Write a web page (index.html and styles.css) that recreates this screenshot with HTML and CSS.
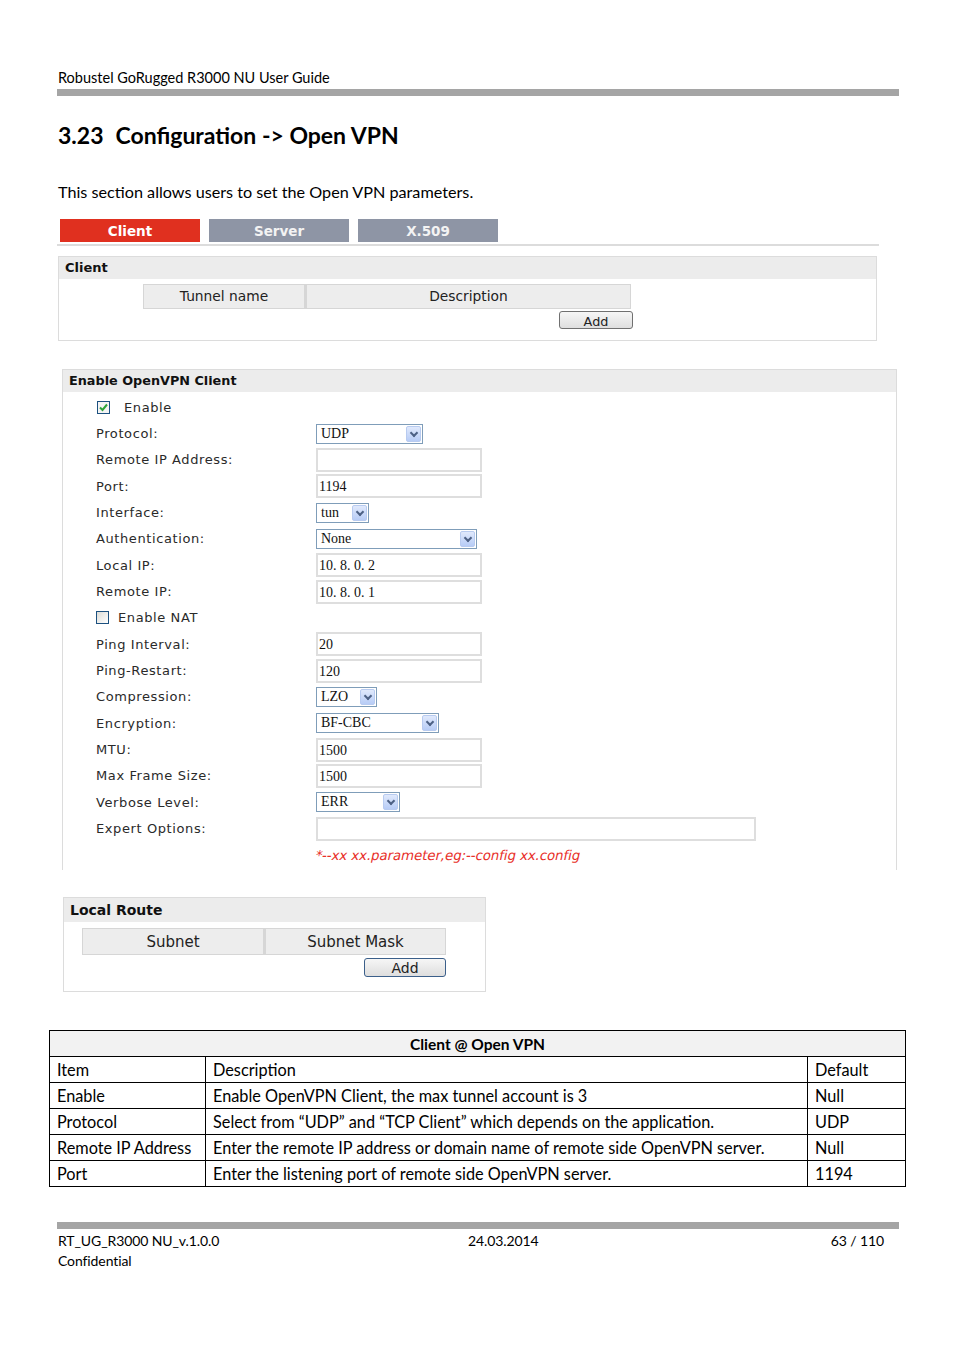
FILE: index.html
```html
<!DOCTYPE html>
<html>
<head>
<meta charset="utf-8">
<link rel="stylesheet" href="styles.css">
</head>
<body>
<div class="page">
  <div class="doc-header">Robustel GoRugged R3000 NU User Guide</div>
  <div class="rule"></div>
  <h1 class="title"><span class="num">3.23</span>Configuration -&gt; Open VPN</h1>
  <p class="intro">This section allows users to set the Open VPN parameters.</p>

  <div class="ui">
    <div class="tabs">
      <div class="tab active">Client</div>
      <div class="tab">Server</div>
      <div class="tab">X.509</div>
    </div>

    <div class="panel client-panel">
      <div class="panel-head">Client</div>
      <div class="list-wrap client-list">
        <div class="list-head">
          <div class="lh-cell tn">Tunnel name</div>
          <div class="lh-cell desc">Description</div>
        </div>
        <div class="btn-row"><span class="btn add1">Add</span></div>
      </div>
    </div>

    <div class="panel vpn-panel">
      <div class="panel-head">Enable OpenVPN Client</div>
      <div class="form">
        <div class="row check-row"><span class="cb checked"><svg viewBox="0 0 11 11" width="11" height="11"><path d="M2 5.5 L4.5 8 L9 2.5" fill="none" stroke="#2ea43a" stroke-width="2"/></svg></span><span class="cb-label">Enable</span></div>
        <div class="row"><span class="lbl">Protocol:</span><span class="sel w-udp"><span class="val">UDP</span><span class="arrow"></span></span></div>
        <div class="row"><span class="lbl">Remote IP Address:</span><span class="inp"></span></div>
        <div class="row"><span class="lbl">Port:</span><span class="inp">1194</span></div>
        <div class="row"><span class="lbl">Interface:</span><span class="sel w-tun"><span class="val">tun</span><span class="arrow"></span></span></div>
        <div class="row"><span class="lbl">Authentication:</span><span class="sel w-none"><span class="val">None</span><span class="arrow"></span></span></div>
        <div class="row"><span class="lbl">Local IP:</span><span class="inp">10.&#8197;8.&#8197;0.&#8197;2</span></div>
        <div class="row"><span class="lbl">Remote IP:</span><span class="inp">10.&#8197;8.&#8197;0.&#8197;1</span></div>
        <div class="row check-row"><span class="cb"></span><span class="cb-label nat">Enable NAT</span></div>
        <div class="row"><span class="lbl">Ping Interval:</span><span class="inp">20</span></div>
        <div class="row"><span class="lbl">Ping-Restart:</span><span class="inp">120</span></div>
        <div class="row"><span class="lbl">Compression:</span><span class="sel w-lzo"><span class="val">LZO</span><span class="arrow"></span></span></div>
        <div class="row"><span class="lbl">Encryption:</span><span class="sel w-bf"><span class="val">BF-CBC</span><span class="arrow"></span></span></div>
        <div class="row"><span class="lbl">MTU:</span><span class="inp">1500</span></div>
        <div class="row"><span class="lbl">Max Frame Size:</span><span class="inp">1500</span></div>
        <div class="row"><span class="lbl">Verbose Level:</span><span class="sel w-err"><span class="val">ERR</span><span class="arrow"></span></span></div>
        <div class="row"><span class="lbl">Expert Options:</span><span class="inp wide"></span></div>
        <div class="row hint-row"><span class="lbl"></span><span class="hint">*--xx xx.parameter,eg:--config xx.config</span></div>
      </div>
    </div>

    <div class="panel route-panel">
      <div class="panel-head">Local Route</div>
      <div class="list-wrap route-list">
        <div class="list-head">
          <div class="lh-cell sn">Subnet</div>
          <div class="lh-cell sm">Subnet Mask</div>
        </div>
        <div class="btn-row"><span class="btn add2">Add</span></div>
      </div>
    </div>
  </div>

  <table class="spec">
    <tr><th colspan="3">Client @ Open VPN</th></tr>
    <tr><td class="c1">Item</td><td class="c2">Description</td><td class="c3">Default</td></tr>
    <tr><td>Enable</td><td>Enable OpenVPN Client, the max tunnel account is 3</td><td>Null</td></tr>
    <tr><td>Protocol</td><td>Select from “UDP” and “TCP Client” which depends on the application.</td><td>UDP</td></tr>
    <tr><td>Remote IP Address</td><td>Enter the remote IP address or domain name of remote side OpenVPN server.</td><td>Null</td></tr>
    <tr><td>Port</td><td>Enter the listening port of remote side OpenVPN server.</td><td>1194</td></tr>
  </table>

  <div class="footer">
    <div class="rule foot-rule"></div>
    <div class="foot-line">
      <span class="f-left">RT_UG_R3000 NU_v.1.0.0</span>
      <span class="f-mid">24.03.2014</span>
      <span class="f-right">63 / 110</span>
    </div>
    <div class="foot-conf">Confidential</div>
  </div>
</div>
</body>
</html>
```
FILE: styles.css
```css
html, body {
  margin: 0;
  padding: 0;
  background: #ffffff;
}
.page {
  width: 954px;
  height: 1350px;
  position: relative;
  font-family: "Lato", "Open Sans", "Liberation Sans", sans-serif;
  color: #000;
}
.doc-header {
  padding: 69px 0 0 58px;
  font-size: 14.5px;
  line-height: 18px;
  height: 20px;
  box-sizing: content-box;
}
.rule {
  margin: 0 0 0 57px;
  width: 842px;
  height: 7px;
  background: #a5a5a5;
}
.title {
  margin: 0;
  padding: 24px 0 0 58px;
  font-size: 23px;
  line-height: 30px;
  font-weight: 700;
  height: 30px;
  box-sizing: content-box;
}
.title .num {
  margin-right: 12px;
}
.intro {
  margin: 0;
  padding: 32px 0 0 58px;
  font-size: 16.2px;
  line-height: 20px;
}

/* ---------- UI screenshot ---------- */
.ui {
  font-family: "DejaVu Sans", "Liberation Sans", sans-serif;
  font-size: 13px;
  color: #222;
  margin-top: 17px;
}
.tabs {
  margin-left: 57px;
  width: 822px;
  padding: 0 0 2px 3px;
  border-bottom: 2px solid #dcdcdc;
  display: flex;
  gap: 9px;
  box-sizing: border-box;
}
.tab {
  width: 140px;
  height: 23px;
  line-height: 24px;
  background: #8e95a5;
  color: #f3f3f3;
  text-align: center;
  font-weight: 700;
  font-family: "DejaVu Sans", sans-serif;
  font-size: 13.5px;
}
.tab.active {
  background: #e0301f;
  color: #ffffff;
}
.panel {
  border: 1px solid #dcdcdc;
  box-sizing: border-box;
  background: #fff;
}
.panel-head {
  background: #ececec;
  font-weight: 700;
  color: #111;
  font-size: 13px;
  height: 22px;
  line-height: 22px;
  padding-left: 6px;
}
.client-panel {
  margin: 10px 0 0 58px;
  width: 819px;
  height: 85px;
}
.list-wrap {
  display: flex;
  flex-direction: column;
}
.client-list {
  padding: 5px 0 0 84px;
}
.list-head {
  display: flex;
}
.lh-cell {
  background: #ededed;
  border: 1px solid #d6d6d6;
  text-align: center;
  box-sizing: border-box;
  height: 25px;
  line-height: 23px;
  color: #222;
  font-size: 13.8px;
}
.lh-cell + .lh-cell { border-left-width: 2px; }
.tn { width: 162px; }
.desc { width: 326px; }
.btn-row {
  display: flex;
  justify-content: flex-end;
}
.client-list .btn-row { width: 490px; }
.btn {
  display: block;
  box-sizing: border-box;
  border: 1px solid #707070;
  border-radius: 3px;
  background: linear-gradient(#f6f6f6, #dedede);
  text-align: center;
  color: #222;
}
.add1 {
  width: 74px;
  height: 18px;
  line-height: 20px;
  margin-top: 2px;
  font-size: 12.8px;
}
.vpn-panel {
  margin: 28px 0 0 62px;
  width: 835px;
  height: 501px;
  border-bottom: none;
}
.vpn-panel .panel-head {
  font-size: 12.8px;
}
.form {
  padding: 2px 0 0 33px;
}
.row {
  display: flex;
  align-items: center;
  height: 26.35px;
}
.lbl {
  width: 220px;
  flex: none;
  color: #2a2a2a;
  letter-spacing: 0.6px;
}
.check-row .cb-label {
  margin-left: 9px;
  color: #2a2a2a;
  letter-spacing: 0.6px;
}
.check-row:first-child .cb-label { margin-left: 14px; }
.check-row:first-child .cb { margin-left: 1px; }
.cb {
  width: 13px;
  height: 13px;
  box-sizing: border-box;
  border: 1px solid #1c5180;
  background: linear-gradient(135deg, #dcdcd7, #ffffff);
  display: flex;
  align-items: center;
  justify-content: center;
  flex: none;
}
.cb.checked { background: #f4f4f4; }
.inp {
  display: block;
  width: 166px;
  height: 24px;
  box-sizing: border-box;
  border: 2px solid #dedede;
  font-family: "Liberation Serif", "DejaVu Serif", serif;
  font-size: 14px;
  line-height: 21px;
  padding-left: 1px;
  color: #111;
}
.inp.wide { width: 440px; }
.sel {
  display: flex;
  align-items: center;
  justify-content: space-between;
  height: 20px;
  box-sizing: border-box;
  border: 1px solid #7f9db9;
  padding: 0 1px 0 4px;
  font-family: "Liberation Serif", "DejaVu Serif", serif;
  font-size: 14px;
  color: #111;
}
.arrow {
  width: 15px;
  height: 16px;
  box-sizing: border-box;
  border: 1px solid #b8cbf0;
  border-radius: 2px;
  background: linear-gradient(#e0e9fc, #b7ccf6);
  position: relative;
}
.arrow::after {
  content: "";
  position: absolute;
  left: 4px;
  top: 3px;
  width: 4px;
  height: 4px;
  border-right: 2px solid #4d6185;
  border-bottom: 2px solid #4d6185;
  transform: rotate(45deg);
}
.w-udp { width: 107px; }
.w-tun { width: 53px; }
.w-none { width: 161px; }
.w-lzo { width: 61px; }
.w-bf { width: 123px; }
.w-err { width: 84px; }
.hint {
  display: inline-block;
  color: #e8302a;
  font-size: 13.4px;
  transform: skewX(-12deg);
  transform-origin: left bottom;
  letter-spacing: -0.1px;
  margin-left: -2px;
}
.route-panel {
  margin: 27px 0 0 63px;
  width: 423px;
  height: 95px;
}
.route-panel .panel-head {
  font-size: 14px;
  height: 24px;
  line-height: 24px;
}
.route-list {
  padding: 6px 0 0 18px;
}
.route-list .lh-cell {
  height: 27px;
  line-height: 26px;
  font-size: 15px;
}
.sn { width: 182px; }
.sm { width: 182px; }
.route-list .btn-row { width: 364px; }
.add2 {
  width: 82px;
  height: 19px;
  line-height: 19px;
  margin-top: 3px;
  border-color: #3b5f8a;
  font-size: 14px;
}

/* ---------- spec table ---------- */
.spec {
  margin: 38px 0 0 49px;
  width: 857px;
  border-collapse: collapse;
  font-size: 16.3px;
}
.spec th, .spec td {
  border: 1px solid #000;
  height: 25px;
  padding: 0 0 0 7px;
  text-align: left;
  line-height: 24px;
  font-weight: 400;
}
.spec th {
  background: #f2f2f2;
  text-align: center;
  font-weight: 700;
  padding: 0;
  font-size: 15.5px;
}
.spec .c1 { width: 148px; }
.spec .c2 { width: 594px; }

/* ---------- footer ---------- */
.footer {
  position: absolute;
  left: 0;
  top: 1222px;
  width: 954px;
}
.foot-rule { height: 7px; }
.foot-line {
  display: flex;
  margin: 3px 0 0 58px;
  width: 826px;
  font-size: 14px;
  line-height: 18px;
  letter-spacing: -0.1px;
}
.f-left { width: 410px; }
.f-mid { flex: 1; }
.f-right { text-align: right; }
.foot-conf {
  margin: 2px 0 0 58px;
  font-size: 14px;
  line-height: 18px;
  letter-spacing: -0.1px;
}
```
